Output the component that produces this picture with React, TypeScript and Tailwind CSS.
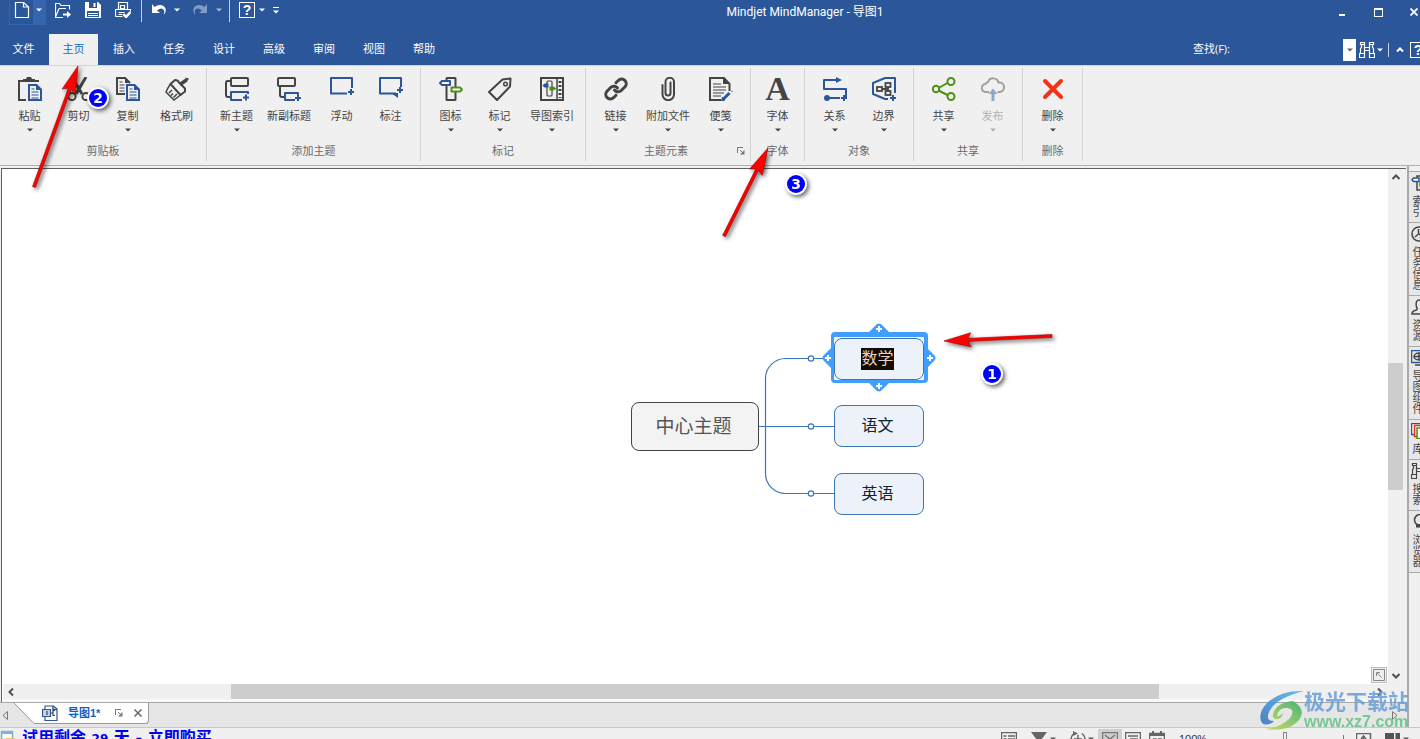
import type { ReactNode } from "react";
import clsx from "clsx";

const DARK = "#444444";
const BLUE = "#2b579a";
const GREEN = "#4e8f14";

function Svg({ size = 24, className, children }: { size?: number; className?: string; children: ReactNode }) {
  return (
    <svg
      width={size}
      height={size}
      viewBox={`0 0 ${size} ${size}`}
      fill="none"
      strokeWidth={size === 24 ? 2 : 1.5}
      className={clsx("shrink-0", className)}
      aria-hidden="true"
    >
      {children}
    </svg>
  );
}

function Caret({ className }: { className?: string }) {
  return (
    <svg width="6" height="4" viewBox="0 0 6 4" className={clsx("shrink-0", className)} aria-hidden="true">
      <path d="M0 0.5h6L3 3.5z" fill="currentColor" />
    </svg>
  );
}

/* ---------- ribbon icons ---------- */

const PageLines = () => (
  <>
    <path d="M11 8h7.5l4.5 4.5V23H11z" stroke={BLUE} fill="#f0f0f0" />
    <path d="M18 7.5v5.5h5.5z" fill={BLUE} />
    <path d="M13.5 12h3M13.5 15h7M13.5 18h7M13.5 21h7" stroke={BLUE} strokeWidth="1.2" />
  </>
);

const icons: Record<string, ReactNode> = {
  paste: (
    <Svg>
      <path d="M8 23H1V4h20" stroke={DARK} />
      <path d="M5 4V2h3l1-2h4l1 2h3v2z" fill={DARK} />
      <PageLines />
    </Svg>
  ),
  cut: (
    <Svg>
      <path d="M5 0l10 17M19 0L9 17" stroke={DARK} strokeWidth="3" />
      <circle cx="5" cy="19.5" r="3.6" stroke={DARK} />
      <circle cx="19" cy="19.5" r="3.6" stroke={DARK} />
    </Svg>
  ),
  copy: (
    <Svg>
      <path d="M9 17H1V1h8l5 5" stroke={DARK} />
      <path d="M9 0.5v5.5h5.5z" fill={DARK} />
      <path d="M3.500 5h3M3.500 8h5M3.500 11h5M3.500 14h5" stroke={DARK} strokeWidth="1.2" />
      <PageLines />
    </Svg>
  ),
  brush: (
    <Svg>
      <path d="M5.500 7L10 3q3 0 4 2.500L20 11.500v3L15.500 18z" stroke={DARK} strokeLinejoin="round" />
      <path d="M15 7.500L21.500 3" stroke={DARK} strokeWidth="3.500" />
      <path d="M20 0.500l4 1-2 3z" fill={DARK} />
      <path d="M5.500 7Q2 12 1 15l8 8 6.500-5M4 16l3-3M8.500 20.500l3.500-3.500M6 18.500l2-2" stroke={DARK} strokeWidth="1.500" />
    </Svg>
  ),
  topic: (
    <Svg>
      <rect x="6" y="1" width="17" height="8" rx="1" stroke={DARK} />
      <path d="M6 4H2.500Q1 4 1 6v12q0 2 2 2h2.500" stroke={DARK} />
      <path d="M23 17v-2H6v8h11" stroke={BLUE} strokeLinejoin="round" />
      <path d="M21 17.500v6M18 20.500h6" stroke={BLUE} />
    </Svg>
  ),
  subtopic: (
    <Svg>
      <rect x="1" y="1" width="17" height="8" rx="1" stroke={DARK} />
      <path d="M3 9v9q0 2 2 2h3" stroke={DARK} />
      <path d="M21 18v-2H8v7h10" stroke={BLUE} strokeLinejoin="round" />
      <path d="M21 18v6M18 21h6" stroke={BLUE} />
    </Svg>
  ),
  floating: (
    <Svg>
      <path d="M17 16.500H1V1h21v10" stroke={BLUE} strokeLinejoin="round" />
      <path d="M21 12v6M18 15h6" stroke={BLUE} />
    </Svg>
  ),
  callout: (
    <Svg>
      <path d="M17 16.500H1V1h21v9" stroke={BLUE} strokeLinejoin="round" />
      <path d="M12 16h7v5z" fill={BLUE} />
      <path d="M21 10v6M18 13h6" stroke={BLUE} />
    </Svg>
  ),
  marker: (
    <Svg>
      <rect x="7.500" y="1" width="9" height="22" rx="0.500" stroke={DARK} />
      <path d="M3 4h8v4H3L1 6z" stroke={BLUE} fill="#fff" strokeLinejoin="round" />
      <path d="M12.500 10.500H21l2 2-2 2h-8.500z" stroke={GREEN} fill="#fff" strokeLinejoin="round" />
    </Svg>
  ),
  tag: (
    <Svg>
      <path d="M1 15L14.500 2.500 22.500 1.500 22 9.500 9 23z" stroke={DARK} strokeLinejoin="round" />
      <circle cx="17.500" cy="7" r="1.800" stroke={DARK} strokeWidth="1.500" />
    </Svg>
  ),
  index: (
    <Svg>
      <rect x="1" y="1" width="22" height="22" stroke={DARK} />
      <path d="M17 1v22" stroke={DARK} strokeWidth="1.500" />
      <path d="M20 4v17" stroke={DARK} strokeWidth="3" strokeDasharray="2 2" />
      <rect x="7" y="4" width="5" height="15" rx="1" stroke={DARK} strokeWidth="1.200" />
      <path d="M2.500 8.500l2-2h4v4h-4z" fill={BLUE} />
      <path d="M9.500 9.500h4l3 2-3 2h-4z" fill={GREEN} />
    </Svg>
  ),
  link: (
    <Svg>
      <g stroke={DARK} strokeWidth="3" strokeLinecap="round">
        <path d="M10.500 13a4.500 4.500 0 0 0 6.800 0.500l3.700-3.700a4.600 4.600 0 0 0-6.500-6.500l-2.500 2.500" />
        <path d="M13.500 11a4.500 4.500 0 0 0-6.800-0.500L3 14.200a4.600 4.600 0 0 0 6.500 6.500l2.500-2.500" />
      </g>
    </Svg>
  ),
  clip: (
    <Svg>
      <path
        d="M14.500 5.500v10.500a2.500 2.500 0 0 1-5 0V5a3.800 3.800 0 0 1 8.500 0v12.500a5.500 5.500 0 0 1-11.500 0V8"
        stroke={DARK}
        strokeLinecap="round"
      />
    </Svg>
  ),
  note: (
    <Svg>
      <path d="M12 23H1V1h14l5.500 6v7" stroke={DARK} />
      <path d="M14 0.500V7h7z" fill={DARK} />
      <path d="M4 7h8M4 10h13M4 13h13M4 16h11M4 19h8" stroke={DARK} strokeWidth="1.200" />
      <path d="M14.500 22L20.500 16" stroke={BLUE} strokeWidth="3" />
      <path d="M22 13.500l1.500 1.500M12.500 24l1-4 2.500 3z" stroke={BLUE} strokeWidth="1" fill={BLUE} />
    </Svg>
  ),
  relation: (
    <Svg>
      <path d="M17 3H1v9h22v9h-3" stroke={BLUE} strokeLinejoin="round" />
      <path d="M13 0l6 3-6 3z" fill={BLUE} />
      <path d="M3 21h14" stroke={BLUE} />
      <circle cx="4" cy="21" r="3" fill={BLUE} />
      <path d="M21 18v6M18 21h6" stroke={BLUE} />
    </Svg>
  ),
  boundary: (
    <Svg>
      <path d="M16 22h-3L1 17V6L13 1h10v15" stroke={BLUE} strokeLinejoin="round" />
      <g stroke={DARK} strokeWidth="1.800">
        <rect x="5" y="10" width="5" height="4" />
        <rect x="13.500" y="6" width="5" height="4" />
        <rect x="13.500" y="14" width="5" height="4" />
        <path d="M10 12h6M16 10v4" />
      </g>
      <path d="M21 18v6M18 21h6" stroke={BLUE} />
    </Svg>
  ),
  share: (
    <Svg>
      <path d="M6.500 11L15.500 6M6.500 13.500L15.500 18" stroke={GREEN} />
      <circle cx="4" cy="12" r="3.200" stroke={GREEN} />
      <circle cx="19" cy="4.500" r="3.500" stroke={GREEN} />
      <circle cx="19" cy="19.500" r="3.500" stroke={GREEN} />
    </Svg>
  ),
  publish: (
    <Svg>
      <path
        d="M8 15H5a4 4 0 0 1-.5-8A4 4 0 0 1 7 5a5.500 5.500 0 0 1 10.500 0.500 4.800 4.800 0 0 1 1.500 9.500h-2.500"
        stroke="#a0a0a0"
      />
      <path d="M12 24V15" stroke="#8fa6cc" strokeWidth="3" />
      <path d="M7.500 17L12 11.500l4.500 5.500z" fill="#8fa6cc" />
    </Svg>
  ),
  remove: (
    <Svg>
      <path d="M4 4l16 16M20 4L4 20" stroke="#f5311b" strokeWidth="4" strokeLinecap="round" />
    </Svg>
  ),
  font: <span className="flex h-6 items-center font-['Liberation_Serif',serif] text-[34px] leading-6 font-bold text-[#444444]">A</span>,
};

type Tool = { label: string; icon: string; menu?: boolean; disabled?: boolean };
type Group = { title: string; tools: Tool[]; launcher?: boolean; narrow?: boolean };

const groups: Group[] = [
  {
    title: "剪贴板",
    tools: [
      { label: "粘贴", icon: "paste", menu: true },
      { label: "剪切", icon: "cut" },
      { label: "复制", icon: "copy", menu: true },
      { label: "格式刷", icon: "brush" },
    ],
  },
  {
    title: "添加主题",
    tools: [
      { label: "新主题", icon: "topic", menu: true },
      { label: "新副标题", icon: "subtopic" },
      { label: "浮动", icon: "floating" },
      { label: "标注", icon: "callout" },
    ],
  },
  {
    title: "标记",
    tools: [
      { label: "图标", icon: "marker", menu: true },
      { label: "标记", icon: "tag", menu: true },
      { label: "导图索引", icon: "index", menu: true },
    ],
  },
  {
    title: "主题元素",
    launcher: true,
    tools: [
      { label: "链接", icon: "link", menu: true },
      { label: "附加文件", icon: "clip", menu: true },
      { label: "便笺", icon: "note", menu: true },
    ],
  },
  { title: "字体", narrow: true, tools: [{ label: "字体", icon: "font", menu: true }] },
  {
    title: "对象",
    tools: [
      { label: "关系", icon: "relation", menu: true },
      { label: "边界", icon: "boundary", menu: true },
    ],
  },
  {
    title: "共享",
    tools: [
      { label: "共享", icon: "share", menu: true },
      { label: "发布", icon: "publish", menu: true, disabled: true },
    ],
  },
  { title: "删除", tools: [{ label: "删除", icon: "remove", menu: true }] },
];

const LauncherIcon = () => (
  <svg width="8" height="8" viewBox="0 0 8 8" fill="none" stroke="#777" aria-hidden="true">
    <path d="M0.500 6V0.500H6M3 3l3 3" />
    <path d="M7.500 3v4.500H3z" fill="#777" stroke="none" />
  </svg>
);

/* ---------- title bar ---------- */

function QuickButton({ label, className, children }: { label: string; className?: string; children: ReactNode }) {
  return (
    <button type="button" aria-label={label} className={clsx("flex h-5 shrink-0 items-center justify-center", className)}>
      {children}
    </button>
  );
}

function Binoculars({ color }: { color: string }) {
  return (
    <Svg size={16}>
      <path
        d="M1.500 0.500h4v2h-4zM10.500 0.500h4v2h-4zM2.500 2.500v3l-1 1v5M5.500 2.500v9M10.500 2.500v9M13.500 2.500v3l1 1v5M5.500 5.500h5M5.500 8.500h5M0.500 11.500h5v4h-5zM10.500 11.500h5v4h-5z"
        stroke={color}
        strokeWidth="1.200"
      />
    </Svg>
  );
}

function HelpIcon() {
  return (
    <span className="flex size-4 shrink-0 items-center justify-center border border-white text-sm leading-none font-bold">
      ?
    </span>
  );
}

function TitleBar() {
  return (
    <header className="flex h-[34px] items-start text-white">
      <div className="flex shrink-0 items-start pl-[9px]">
        <div className="flex h-[25px] w-[37px] border border-t-0 border-[#3465ae]">
          <QuickButton label="新建" className="flex-1">
            <Svg size={16}>
              <path d="M1.500 0.500h8L14.500 5v10.500h-13z" stroke="#fff" strokeWidth="1.200" />
              <path d="M9.500 0.500V5h5" stroke="#fff" strokeWidth="1.200" />
            </Svg>
          </QuickButton>
          <button type="button" aria-label="新建选项" className="flex w-3 items-center justify-center bg-[#3465ae] pb-1">
            <Caret />
          </button>
        </div>
        <QuickButton label="打开" className="ml-[2px] w-[30px]">
          <Svg size={16}>
            <path d="M8 15.500H0.500V1.500h4l1.500 2h8.500v4M0.500 15L4 6.500h7" stroke="#fff" strokeWidth="1.200" />
            <path d="M8 12.500h5" stroke="#fff" strokeWidth="2" />
            <path d="M12 9l4 3.500-4 3.500z" fill="#fff" />
          </Svg>
        </QuickButton>
        <QuickButton label="保存" className="w-[30px]">
          <Svg size={16}>
            <path d="M0 0h13l3 3v13H0z" fill="#fff" />
            <path d="M4 0h8v6H4zM2 9h12v6H2z" fill={BLUE} />
            <path d="M8.500 1h2v4h-2zM3 11h10v1H3zM3 13h10v1H3z" fill="#fff" />
          </Svg>
        </QuickButton>
        <QuickButton label="快速打印" className="w-[30px]">
          <Svg size={16}>
            <path d="M3.500 7V0.500h9V7M0.500 14.500V7.500h15v2M0.500 14.500h7M3.500 10.500h6M3.500 12.500h4M5.500 3.500h4v3h-4z" stroke="#fff" strokeWidth="1.200" />
            <path d="M8.500 12l2.500 3 4.500-5" stroke="#fff" strokeWidth="2.500" />
          </Svg>
        </QuickButton>
        <span className="mx-[3px] h-[22px] w-px bg-[#c5d0e4]" />
        <QuickButton label="撤销" className="w-7">
          <Svg size={16}>
            <path d="M1 2v9h8L6 8.500Q10 5 12.500 7.500 14 9.500 12.500 13 15.500 10 14.500 6.500 13 3 9 3 6 3 3.500 5z" fill="#fff" />
          </Svg>
        </QuickButton>
        <QuickButton label="撤销选项" className="w-2">
          <Caret />
        </QuickButton>
        <QuickButton label="重做" className="ml-1 w-[30px] text-[#7f9bc8]">
          <Svg size={16}>
            <path d="M15 2v9H7l3-2.500Q6 5 3.500 7.500 2 9.500 3.500 13 0.500 10 1.500 6.500 3 3 7 3q3 0 5.500 2z" fill="currentColor" />
          </Svg>
        </QuickButton>
        <QuickButton label="重做选项" className="w-2 text-[#b9b9b9]">
          <Caret />
        </QuickButton>
        <span className="mx-[6px] h-[22px] w-px bg-[#c5d0e4]" />
        <QuickButton label="帮助" className="w-[22px]">
          <HelpIcon />
        </QuickButton>
        <QuickButton label="帮助选项" className="w-2">
          <Caret />
        </QuickButton>
        <QuickButton label="自定义快速访问工具栏" className="w-5 flex-col gap-[2px]">
          <span className="h-px w-[6px] bg-white" />
          <Caret />
        </QuickButton>
      </div>
      <h1 className="min-w-0 flex-1 truncate text-center font-[Roboto,'Noto_Sans_CJK_SC',sans-serif] text-xs leading-6">
        Mindjet MindManager - 导图1
      </h1>
      <div className="flex h-6 shrink-0">
        <button type="button" aria-label="最小化" className="flex w-9 items-center justify-center pt-[6px]">
          <span className="h-[2px] w-[6px] bg-white" />
        </button>
        <button type="button" aria-label="最大化" className="flex w-9 items-center justify-center">
          <span className="h-[9px] w-[9px] border border-t-2 border-white" />
        </button>
        <button type="button" aria-label="关闭" className="flex w-6 items-center justify-end pr-[2px]">
          <svg width="8" height="8" viewBox="0 0 8 8" stroke="#fff" strokeWidth="1.800" aria-hidden="true">
            <path d="M0.500 0.500l7 7M7.500 0.500l-7 7" />
          </svg>
        </button>
      </div>
    </header>
  );
}

const tabs = ["文件", "主页", "插入", "任务", "设计", "高级", "审阅", "视图", "帮助"];

function TabBar() {
  return (
    <div className="flex h-[31px] items-stretch text-[11px] text-white">
      <nav className="flex flex-1">
        {tabs.map((tab) => (
          <button
            key={tab}
            type="button"
            className={clsx(
              "flex items-center justify-center",
              tab === "文件" ? "w-[49px] pr-[2px]" : tab === "主页" ? "mr-[1px] w-[49px] bg-[#f0f0f0] text-[#0f6ccb]" : "w-[50px]",
            )}
          >
            {tab}
          </button>
        ))}
      </nav>
      <form className="flex shrink-0 items-center" onSubmit={(e) => e.preventDefault()}>
        <label htmlFor="find" className="mr-[6px] font-['Open_Sans','Noto_Sans_CJK_SC',sans-serif]">
          查找(F):
        </label>
        <input id="find" type="text" className="h-[22px] w-[107px] bg-[#2b579a] px-1 text-white outline-none" />
        <button type="button" aria-label="查找历史" className="flex h-[22px] w-[13px] items-center justify-center bg-white text-[#666]">
          <Caret />
        </button>
        <button type="submit" aria-label="查找" className="ml-[3px] flex items-center">
          <Binoculars color="#fff" />
        </button>
        <button type="button" aria-label="查找选项" className="ml-px flex h-5 w-2 items-center justify-center">
          <Caret />
        </button>
        <span className="mx-1 h-[14px] w-px bg-[#c5d0e4]" />
        <button type="button" aria-label="折叠功能区" className="flex w-[14px] items-center justify-center">
          <svg width="8" height="5" viewBox="0 0 8 5" fill="none" stroke="#fff" strokeWidth="2" aria-hidden="true">
            <path d="M1 4.500l3-3 3 3" />
          </svg>
        </button>
        <button type="button" aria-label="帮助" className="ml-[3px] flex w-[10px] overflow-hidden">
          <HelpIcon />
        </button>
      </form>
    </div>
  );
}

/* ---------- ribbon ---------- */

function Ribbon() {
  return (
    <div className="flex h-[100px] shrink-0 border-t border-[#d0d6de] bg-[#f0f0f0] pt-[2px] pb-1">
      {groups.map((group) => (
        <section key={group.title} className={clsx("flex flex-col border-r border-[#d2d2d2]", group.narrow ? "px-[2px]" : "px-[5px]")}>
          <div className="flex">
            {group.tools.map((tool) => (
              <button
                key={tool.label}
                type="button"
                disabled={tool.disabled}
                className={clsx(
                  "flex h-[75px] flex-col items-center pt-[9px]",
                  tool.label.length > 3 ? "w-14" : "w-[49px]",
                  tool.disabled ? "text-[#b0b0b0]" : "text-[#444]",
                )}
              >
                {icons[tool.icon]}
                <span className="mt-[7px] text-[11px] leading-4 whitespace-nowrap">{tool.label}</span>
                {tool.menu && <Caret className="mt-[4px]" />}
              </button>
            ))}
          </div>
          <div className="flex items-center justify-center text-[11px] leading-4 text-[#6a6a6a]">
            {group.launcher && <span className="w-1" />}
            <h2 className="flex-1 text-center">{group.title}</h2>
            {group.launcher && (
              <button type="button" aria-label="主题元素设置" className="-mr-px flex w-[9px] justify-start">
                <LauncherIcon />
              </button>
            )}
          </div>
        </section>
      ))}
    </div>
  );
}

/* ---------- map ---------- */

function Handle({ x, y, angle }: { x: number; y: number; angle: number }) {
  return (
    <g transform={`translate(${x} ${y})`}>
      <path d="M-13 6L-2.500 -4.500Q0 -6.500 2.500 -4.500L13 6z" fill="#409eff" transform={`rotate(${angle})`} />
      <path d="M0 -3v6M-3 0h6" stroke="#fff" strokeWidth="2" />
    </g>
  );
}

const nodeBase = "absolute flex items-center justify-center rounded-lg border";

function MindMap() {
  return (
    <div className="absolute top-[149px] left-[618px] h-[210px] w-[320px]">
      <svg className="absolute inset-0" width="320" height="210" viewBox="0 0 320 210" fill="none" aria-hidden="true">
        <g stroke="#3a76b4" strokeWidth="1.200">
          <path d="M138 108.500h75M213 40.500h-48.500a20 20 0 0 0-20 20v95a20 20 0 0 0 20 20H213" />
          <g fill="#fff">
            <circle cx="190" cy="40.500" r="2.700" />
            <circle cx="190" cy="108.500" r="2.700" />
            <circle cx="190" cy="175.500" r="2.700" />
          </g>
        </g>
        <rect x="210" y="14" width="97" height="51" rx="4" fill="#409eff" />
        <Handle x={258} y={11} angle={0} />
        <Handle x={258} y={68} angle={180} />
        <Handle x={207} y={40} angle={-90} />
        <Handle x={309} y={40} angle={90} />
        <rect x="213" y="19" width="90" height="43" rx="1" fill="#fff" />
      </svg>
      <button type="button" className={clsx(nodeBase, "top-[84px] left-[10px] h-[49px] w-32 border-[#444] bg-[#f3f3f3] pt-[2px] pr-[3px] text-[19px] text-[#555]")}>
        中心主题
      </button>
      <button type="button" className={clsx(nodeBase, "top-5 left-[213px] h-[42px] w-[90px] border-[#3a76b4] bg-[#edf2fa] pr-[3px] pb-px text-base")}>
        <span className="bg-[#120c05] leading-[22px] text-[#ecd2c2]">数学</span>
      </button>
      <button type="button" className={clsx(nodeBase, "top-[87px] left-[213px] h-[42px] w-[90px] border-[#3a76b4] bg-[#edf2fa] pr-[3px] pb-px text-base text-[#10242e]")}>
        语文
      </button>
      <button type="button" className={clsx(nodeBase, "top-[155px] left-[213px] h-[42px] w-[90px] border-[#3a76b4] bg-[#edf2fa] pr-[3px] pb-px text-base text-[#10242e]")}>
        英语
      </button>
    </div>
  );
}

function Chevron({ d }: { d: string }) {
  return (
    <svg width="8" height="8" viewBox="0 0 8 8" fill="none" stroke="#505050" strokeWidth="2" aria-hidden="true">
      <path d={d} />
    </svg>
  );
}

const scrollButton = "flex size-4 shrink-0 items-center justify-center";

function Workspace() {
  return (
    <div className="ml-px flex min-h-0 flex-1 flex-col border-t border-l border-[#606060] bg-white pl-px">
      <div className="flex min-h-0 flex-1">
        <main className="relative min-w-0 flex-1 overflow-hidden bg-white">
          <MindMap />
          <button
            type="button"
            aria-label="适合窗口"
            className="absolute right-[1px] bottom-[1px] flex size-4 items-center justify-center border border-[#bbb] bg-[#eee]"
          >
            <svg width="12" height="12" viewBox="0 0 12 12" fill="none" stroke="#888" aria-hidden="true">
              <path d="M0.500 0.500h11v11H0.500zM3.500 7V3.500H7M4 4l4.500 4.500" />
            </svg>
          </button>
        </main>
        <div className="flex w-[15px] shrink-0 flex-col items-center bg-[#f0f0f0]">
          <button type="button" aria-label="向上滚动" className={scrollButton}>
            <Chevron d="M0.500 6L4 2.500 7.500 6" />
          </button>
          <div className="flex-[178]" />
          <div className="w-full flex-[127] bg-[#cdcdcd]" />
          <div className="flex-[178]" />
          <button type="button" aria-label="向下滚动" className={scrollButton}>
            <Chevron d="M0.500 2L4 5.500 7.500 2" />
          </button>
        </div>
        <div className="w-[3px] bg-[#f0f0f0]" />
      </div>
      <div className="flex h-[15px] shrink-0 items-center bg-[#f0f0f0] pr-[18px]">
        <button type="button" aria-label="向左滚动" className={scrollButton}>
          <Chevron d="M6 0.500L2.500 4 6 7.500" />
        </button>
        <div className="flex-[212]" />
        <div className="h-full flex-[928] bg-[#cdcdcd]" />
        <div className="flex-[213]" />
        <button type="button" aria-label="向右滚动" className={scrollButton}>
          <Chevron d="M2 0.500L5.500 4 2 7.500" />
        </button>
      </div>
      <div className="h-[3px] bg-[#f8f8f8]" />
    </div>
  );
}

function DocumentTabs() {
  return (
    <div className="flex h-[25px] shrink-0 items-start border-t border-[#a8a8a8] bg-[#e6e6e6]">
      <button type="button" aria-label="上一个" className="flex h-6 w-[14px] items-center pl-[2px]">
        <svg width="6" height="9" viewBox="0 0 6 9" fill="none" stroke="#777" aria-hidden="true">
          <path d="M5.500 0.500v8L1 4.500z" />
        </svg>
      </button>
      <svg width="20" height="21" viewBox="0 0 20 21" aria-hidden="true">
        <path d="M0 0h20v21z" fill="#fff" />
        <path d="M0 0l20 20.500" stroke="#999" />
      </svg>
      <div className="flex h-[21px] items-center rounded-br-sm border-r border-b border-[#999] bg-white pr-[6px] pb-px pl-2">
        <Svg size={16}>
          <path d="M3 4V1h8.500L15 4v11.500H3V12" stroke="#2b579a" strokeWidth="1.200" />
          <path d="M11 1v3.500h4" stroke="#2b579a" />
          <path d="M0.500 4.500h8v7h-8z" fill="#c9d2e3" stroke="#2b579a" strokeWidth="1.200" />
          <path d="M5 6v4M9 8h2M13 5.500h-2v5h2" stroke="#444" strokeWidth="1.200" />
        </Svg>
        <button type="button" className="ml-[10px] text-[11px] leading-4 font-bold text-[#0f62c0]">
          导图1*
        </button>
        <button type="button" aria-label="还原" className="ml-[15px]">
          <LauncherIcon />
        </button>
        <button type="button" aria-label="关闭导图" className="ml-[11px]">
          <svg width="8" height="8" viewBox="0 0 8 8" stroke="#666" strokeWidth="1.500" aria-hidden="true">
            <path d="M0.500 0.500l7 7M7.500 0.500l-7 7" />
          </svg>
        </button>
      </div>
      <button type="button" aria-label="下一个" className="ml-auto flex h-6 items-center pr-[8px]">
        <svg width="6" height="9" viewBox="0 0 6 9" fill="none" stroke="#777" aria-hidden="true">
          <path d="M0.500 0.500v8L5 4.500z" />
        </svg>
      </button>
    </div>
  );
}

/* ---------- side rail ---------- */

const panels: { label: string; icon: ReactNode }[] = [
  {
    label: "索引",
    icon: (
      <Svg size={16}>
        <path d="M6 1h6v14H6z" stroke={DARK} />
        <path d="M2.500 3H8v3.500H2.500L1 4.800z" stroke={BLUE} fill="#fff" />
        <path d="M9 8h5v3H9z" stroke={GREEN} fill="#fff" />
      </Svg>
    ),
  },
  {
    label: "任务信息",
    icon: (
      <Svg size={16}>
        <circle cx="8" cy="8" r="7" stroke={DARK} />
        <path d="M7.500 3v5L4 11M8 8l3 2" stroke={DARK} />
        <path d="M9 11l2 2 4-4" stroke={GREEN} strokeWidth="2" />
      </Svg>
    ),
  },
  {
    label: "资源",
    icon: (
      <Svg size={16}>
        <path d="M15 15H1q0-3 4.500-4Q7 10 5.500 8 4 1 8.500 1T11.500 8q-1.500 2 0 3 3.500 1 3.500 4" stroke={DARK} />
      </Svg>
    ),
  },
  {
    label: "导图组件",
    icon: (
      <Svg size={16}>
        <path d="M0.500 0.500h14v12h-14z" stroke={BLUE} />
        <ellipse cx="8" cy="6.500" rx="5" ry="3.500" stroke={DARK} />
        <path d="M3 6.500h10M8 3v7M4 15h8" stroke={DARK} />
      </Svg>
    ),
  },
  {
    label: "库",
    icon: (
      <Svg size={16}>
        <path d="M0.500 0.500h9v11h-9z" stroke={BLUE} fill="#fff" />
        <path d="M3.500 2.500h9v11h-9z" stroke="#e8301c" fill="#fff" />
        <path d="M6 5h9v10.500H6z" stroke={GREEN} fill="#fff" />
      </Svg>
    ),
  },
  { label: "搜索", icon: <Binoculars color={DARK} /> },
  {
    label: "浏览器",
    icon: (
      <Svg size={16}>
        <circle cx="9" cy="6" r="5.500" stroke={DARK} />
        <path d="M5 11l8 0M5 12.500h8" stroke={DARK} strokeWidth="2" />
      </Svg>
    ),
  },
];

function SideRail() {
  return (
    <aside className="flex w-[13px] shrink-0 flex-col overflow-hidden border-l-2 border-[#a9a9a9] bg-[#f0f0f0] pt-[5px] text-[#444]">
      {panels.map((panel) => (
        <button
          key={panel.label}
          type="button"
          className="flex w-6 shrink-0 flex-col items-start gap-1 border-t border-[#a9a9a9] bg-[#e8e8e8] pt-[3px] pb-[5px] pl-[2px] last:border-b"
        >
          {panel.icon}
          <span className="text-[11px] leading-[11px] [writing-mode:vertical-rl]">{panel.label}</span>
        </button>
      ))}
    </aside>
  );
}

/* ---------- status bar ---------- */

function StatusBar() {
  return (
    <footer className="flex h-3 shrink-0 items-start justify-between overflow-hidden border-t border-[#c8c8c8] bg-[#f0f0f0] text-[#555]">
      <div className="flex items-start">
        <Svg size={16} className="mt-[2px]">
          <path d="M1.500 1.500h11v8h-11z" stroke="#8ab" fill="#fff" />
          <path d="M1 1h12v3H1z" fill="#7fb0e8" />
          <path d="M6 8h9v7H6z" fill="#f0c75e" />
        </Svg>
        <a href="#buy" className="ml-[6px] font-['DejaVu_Sans','Noto_Sans_CJK_SC',sans-serif] text-base leading-5 font-bold text-[#0000f0]">
          试用剩余 <span className="text-xs">29</span> 天 - 立即购买
        </a>
      </div>
      <div className="flex items-start pt-[1px] pr-[11px]">
        <button type="button" aria-label="大纲" className="mt-[3px]">
          <Svg size={16}>
            <path d="M0.500 0.500h15v14H0.500zM2.500 4h3M7 4h7M2.500 7h3M7 7h7" stroke="#666" />
          </Svg>
        </button>
        <button type="button" aria-label="筛选" className="mt-[3px] ml-[14px] flex items-start gap-[3px]">
          <Svg size={16}>
            <path d="M0 0h16l-6 8v7H6V8z" fill="#666" />
          </Svg>
          <Caret className="mt-[5px]" />
        </button>
        <button type="button" aria-label="详细程度" className="mt-[2px] ml-[14px] flex items-start gap-[2px]">
          <Svg size={16}>
            <path d="M4 2.500a7 7 0 1 0 8 0M8 4v8M4 8h8" stroke="#666" />
            <path d="M3 0l5 2.500L3 5z" fill="#666" />
          </Svg>
          <Caret className="mt-[6px]" />
        </button>
        <button type="button" aria-label="导图视图" className="ml-[4px] flex h-6 w-6 justify-center bg-[#cfcfcf] pt-[3px]">
          <Svg size={16}>
            <path d="M0.500 0.500h15v14H0.500zM3 3l5 4 5-4" stroke="#777" />
          </Svg>
        </button>
        <button type="button" aria-label="大纲视图" className="mt-[3px] ml-[3px]">
          <Svg size={16}>
            <path d="M0.500 0.500h15v14H0.500zM3 4h10M5 7h8" stroke="#666" />
          </Svg>
        </button>
        <button type="button" aria-label="日程视图" className="mt-[2px] ml-[8px]">
          <Svg size={16}>
            <path d="M0.500 2.500h15v13H0.500z" stroke="#666" />
            <path d="M0 2h16v3H0zM3 0h2v3H3zM11 0h2v3h-2z" fill="#666" />
            <path d="M4 8h3v3M9 8h3v3" stroke="#666" />
          </Svg>
        </button>
        <span className="ml-[14px] w-[48px] text-[11px] leading-5 text-[#333]">100%</span>
        <button type="button" aria-label="缩小" className="flex h-5 w-[15px] items-center">
          <span className="h-px w-2 bg-[#777]" />
        </button>
        <input
          type="range"
          min={0}
          max={200}
          defaultValue={98}
          aria-label="缩放"
          className="mt-[3px] h-[15px] w-[88px] appearance-none bg-transparent bg-[linear-gradient(#999,#999)] bg-[length:100%_1px] bg-center bg-no-repeat [&::-webkit-slider-thumb]:h-[15px] [&::-webkit-slider-thumb]:w-[4px] [&::-webkit-slider-thumb]:appearance-none [&::-webkit-slider-thumb]:border [&::-webkit-slider-thumb]:border-[#888] [&::-webkit-slider-thumb]:bg-[#f0f0f0]"
        />
        <button type="button" aria-label="放大" className="mt-[6px] ml-[9px] w-[13px]">
          <svg width="9" height="9" viewBox="0 0 9 9" stroke="#777" aria-hidden="true">
            <path d="M4.500 0v9M0 4.500h9" />
          </svg>
        </button>
        <button type="button" aria-label="适合窗口" className="mt-[4px] ml-[4px]">
          <Svg size={16}>
            <path d="M0.500 0.500h14v12H0.500zM7.500 3v6M5 6l2.500-3L10 6" stroke="#666" />
          </Svg>
        </button>
        <button type="button" aria-label="面板布局" className="mt-[4px] ml-[13px] flex items-start gap-[2px]">
          <Svg size={16}>
            <path d="M0 0h9v12H0zM10.500 0H15v12h-4.500" fill="#555" />
          </Svg>
          <Caret className="mt-1" />
        </button>
      </div>
    </footer>
  );
}

/* ---------- overlays ---------- */

function Arrow({ from, to }: { from: [number, number]; to: [number, number] }) {
  const dx = to[0] - from[0];
  const dy = to[1] - from[1];
  const length = Math.hypot(dx, dy);
  const angle = (Math.atan2(dy, dx) * 180) / Math.PI;
  return (
    <g transform={`translate(${to[0]} ${to[1]}) rotate(${angle})`} fill="#ff0000" stroke="#a80000" strokeWidth="0.600">
      <path d={`M0 0L-27 -7L-24 -1.500H${-length}v3H-24L-27 7z`} />
    </g>
  );
}

function Badge({ x, y, label }: { x: number; y: number; label: string }) {
  return (
    <g>
      <circle cx={x} cy={y} r="11" fill="#fff" />
      <circle cx={x} cy={y} r="9" fill="#0000ff" />
      <text x={x} y={y + 5} textAnchor="middle" fill="#fff" className="font-['DejaVu_Sans',sans-serif] text-[14px] font-bold">
        {label}
      </text>
    </g>
  );
}

function Annotations() {
  return (
    <svg className="pointer-events-none absolute top-0 left-0 h-[400px] w-[1100px] drop-shadow-[2px_2px_2px_rgba(0,0,0,0.6)]" viewBox="0 0 1100 400">
      <Arrow from={[34, 187]} to={[78, 66]} />
      <Arrow from={[724, 236]} to={[768, 148]} />
      <Arrow from={[1052, 336]} to={[944, 341]} />
      <Badge x={992} y={374} label="1" />
      <Badge x={98} y={98} label="2" />
      <Badge x={796} y={184} label="3" />
    </svg>
  );
}

function Watermark() {
  return (
    <div className="pointer-events-none absolute right-[11px] bottom-[7px] flex items-center opacity-90">
      <svg width="44" height="42" viewBox="0 0 44 42" fill="none" aria-hidden="true">
        <defs>
          <linearGradient id="swoosh-blue" x1="0" y1="1" x2="1" y2="0">
            <stop offset="0" stopColor="#3c76c0" />
            <stop offset="1" stopColor="#55b9ee" />
          </linearGradient>
          <linearGradient id="swoosh-green" x1="0" y1="1" x2="1" y2="0">
            <stop offset="0" stopColor="#c9dc55" />
            <stop offset="1" stopColor="#3eae6c" />
          </linearGradient>
        </defs>
        <path d="M44 1Q22 0 8 12-2 22 1 31q2 5 8 3 4-1 5-3-7 0-6-6Q12 9 44 1z" fill="url(#swoosh-blue)" />
        <path d="M33 11q16 10 3 22-10 9-31 6 17-2 25-11 6-9-3-10-8-1-10 8 3 1 6-3-1 6-7 6-5-1-2-8 5-9 19-10z" fill="url(#swoosh-green)" />
      </svg>
      <div className="flex flex-col">
        <span className="text-[21px] leading-[22px] font-bold text-[#6ea3da]">极光下载站</span>
        <span className="font-['Liberation_Sans',sans-serif] text-base leading-[18px] font-bold text-[#6cc48c]">www.xz7.com</span>
      </div>
    </div>
  );
}

export default function App() {
  return (
    <div className="relative flex h-screen flex-col overflow-hidden bg-[#f0f0f0] font-['Liberation_Sans','Noto_Sans_CJK_SC',sans-serif]">
      <div className="shrink-0 bg-[#2b579a]">
        <TitleBar />
        <TabBar />
      </div>
      <Ribbon />
      <div className="flex min-h-0 flex-1 border-t border-[#b0b0b0]">
        <div className="flex min-w-0 flex-1 flex-col pt-[2px] pr-px">
          <Workspace />
          <DocumentTabs />
        </div>
        <SideRail />
      </div>
      <StatusBar />
      <Annotations />
      <Watermark />
    </div>
  );
}
